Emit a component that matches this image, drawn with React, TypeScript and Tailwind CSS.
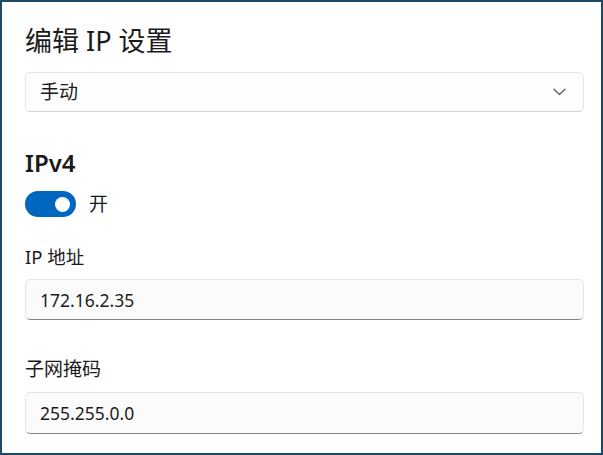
import React from "react";

const font = { fontFamily: '"Noto Sans", "Noto Sans CJK SC", sans-serif' };

export default function App() {
  return (
    <div
      className="w-[603px] h-[455px] border-2 border-[#1d4a68] bg-white overflow-hidden text-[#1b1b1b] font-['Noto_Sans','Noto_Sans_CJK_SC',sans-serif]"
      style={font}
    >
      <div className="flex flex-col pl-[23px] pr-[17px] pt-[21px]">
        <div className="h-[36px] leading-[36px] text-[27px] font-normal">编辑 IP 设置</div>

        <div className="mt-[13px] h-[40px] flex items-center justify-between rounded-[5px] border border-[#e6e6e6] border-b-[#d2d2d2] bg-[#fdfdfd] pl-[14px] pr-[17px]">
          <span className="text-[19px] leading-[24px]">手动</span>
          <svg width="13" height="8" viewBox="0 0 13 8" fill="none">
            <path d="M1 1.2 L6.5 6.5 L12 1.2" stroke="#5c5c5c" strokeWidth="1.3" strokeLinecap="round" strokeLinejoin="round" />
          </svg>
        </div>

        <div className="mt-[35px] h-[32px] leading-[32px] text-[24px] font-semibold">IPv4</div>

        <div className="mt-[12px] h-[26px] flex items-center gap-[13px]">
          <div className="w-[51px] h-[26px] rounded-full bg-[#0067c0] flex items-center justify-end pr-[6px]">
            <div className="w-[15px] h-[15px] rounded-full bg-white" />
          </div>
          <span className="text-[19px] leading-[24px]">开</span>
        </div>

        <div className="mt-[28px] h-[24px] leading-[24px] text-[18.5px]">IP 地址</div>
        <div className="mt-[10px] h-[41px] flex items-center rounded-[5px] border border-[#e6e6e6] border-b-[#868686] bg-[#fbfbfb] pl-[14px]">
          <span className="text-[17.5px] leading-[24px]">172.16.2.35</span>
        </div>

        <div className="mt-[37px] h-[24px] leading-[24px] text-[19px]">子网掩码</div>
        <div className="mt-[11px] h-[42px] flex items-center rounded-[5px] border border-[#e6e6e6] border-b-[#868686] bg-[#fbfbfb] pl-[14px]">
          <span className="text-[17.5px] leading-[24px]">255.255.0.0</span>
        </div>
      </div>
    </div>
  );
}
